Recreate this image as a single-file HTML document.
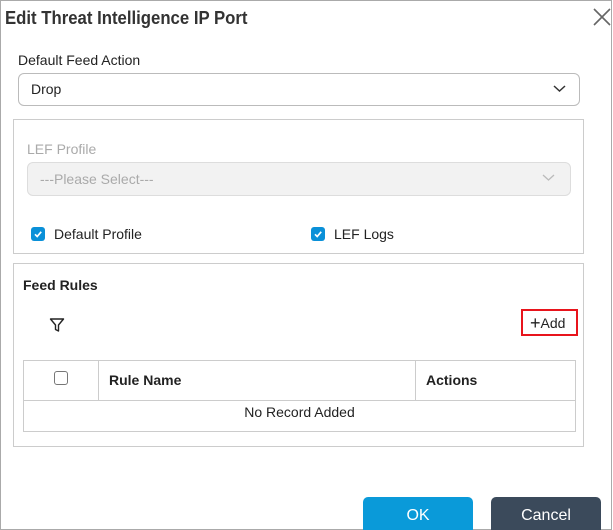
<!DOCTYPE html>
<html><head><style>
*{margin:0;padding:0;box-sizing:border-box}
html,body{width:613px;height:530px;overflow:hidden}
body{background:#fff;font-family:"Liberation Sans",sans-serif;color:#222;position:relative}
.a{position:absolute}
.frame{left:0;top:0;width:612px;height:530px;border:1px solid #aaa}
.t{white-space:nowrap;transform-origin:left center}
</style></head><body>
<div class="a frame"></div>
<div class="a t" style="left:5px;top:8px;font-size:18px;font-weight:bold;color:#333;transform:scaleX(0.93)">Edit Threat Intelligence IP Port</div>
<svg class="a" style="left:593px;top:8px" width="18" height="18" viewBox="0 0 18 18"><path d="M1 1L17 17M17 1L1 17" stroke="#666" stroke-width="1.6"/></svg>

<div class="a t" style="left:18px;top:52px;font-size:14px">Default Feed Action</div>
<div class="a" style="left:18px;top:73px;width:562px;height:33px;border:1px solid #bbb;border-radius:6px"></div>
<div class="a t" style="left:31px;top:81px;font-size:14px">Drop</div>
<svg class="a" style="left:553px;top:84px" width="13" height="9"><path d="M1 2L6.5 7L12 2" stroke="#333" stroke-width="1.5" fill="none"/></svg>

<div class="a" style="left:13px;top:119px;width:571px;height:135px;border:1px solid #ccc"></div>
<div class="a t" style="left:27px;top:141px;font-size:14px;color:#aaa">LEF Profile</div>
<div class="a" style="left:27px;top:162px;width:544px;height:34px;border:1px solid #ddd;border-radius:6px;background:#f2f2f2"></div>
<div class="a t" style="left:40px;top:171px;font-size:14px;color:#aaa">---Please Select---</div>
<svg class="a" style="left:542px;top:173px" width="13" height="9"><path d="M1 2L6.5 7L12 2" stroke="#bbb" stroke-width="1.3" fill="none"/></svg>

<div class="a" style="left:31px;top:227px;width:14px;height:14px;background:#0a90d8;border-radius:3px"></div>
<svg class="a" style="left:31px;top:227px" width="14" height="14"><path d="M4 7.3L6.2 9.5L10.2 4.8" stroke="#fff" stroke-width="1.7" fill="none"/></svg>
<div class="a t" style="left:54px;top:226px;font-size:14px">Default Profile</div>
<div class="a" style="left:311px;top:227px;width:14px;height:14px;background:#0a90d8;border-radius:3px"></div>
<svg class="a" style="left:311px;top:227px" width="14" height="14"><path d="M4 7.3L6.2 9.5L10.2 4.8" stroke="#fff" stroke-width="1.7" fill="none"/></svg>
<div class="a t" style="left:334px;top:226px;font-size:14px">LEF Logs</div>

<div class="a" style="left:13px;top:263px;width:571px;height:184px;border:1px solid #ccc"></div>
<div class="a t" style="left:23px;top:277px;font-size:14px;font-weight:bold">Feed Rules</div>
<svg class="a" style="left:49px;top:317px" width="16" height="16"><path d="M1.5 2H14.5L9.5 8V14L6.5 12.5V8Z" stroke="#222" stroke-width="1.4" fill="none" stroke-linejoin="round"/></svg>
<div class="a" style="left:521px;top:309px;width:57px;height:27px;border:2px solid #e8141c"></div>
<div class="a t" style="left:530px;top:312px;font-size:14px;color:#222"><span style="font-size:18px;font-weight:300;position:relative;top:1px">+</span>Add</div>

<div class="a" style="left:23px;top:360px;width:553px;height:72px;border:1px solid #ccc"></div>
<div class="a" style="left:23px;top:400px;width:553px;height:1px;background:#ccc"></div>
<div class="a" style="left:98px;top:360px;width:1px;height:40px;background:#ccc"></div>
<div class="a" style="left:415px;top:360px;width:1px;height:40px;background:#ccc"></div>
<div class="a" style="left:54px;top:371px;width:14px;height:14px;border:1px solid #777;border-radius:3px"></div>
<div class="a t" style="left:109px;top:372px;font-size:14px;font-weight:bold">Rule Name</div>
<div class="a t" style="left:426px;top:372px;font-size:14px;font-weight:bold">Actions</div>
<div class="a" style="left:23px;top:404px;width:553px;text-align:center;font-size:14px">No Record Added</div>

<div class="a" style="left:363px;top:497px;width:110px;height:33px;background:#0a9ad9;border-radius:5px 5px 0 0"></div>
<div class="a" style="left:363px;top:507px;width:110px;text-align:center;color:#fff;font-size:16px">OK</div>
<div class="a" style="left:491px;top:497px;width:110px;height:33px;background:#3b4a5b;border-radius:5px 5px 0 0"></div>
<div class="a" style="left:491px;top:507px;width:110px;text-align:center;color:#fff;font-size:16px">Cancel</div>
</body></html>
